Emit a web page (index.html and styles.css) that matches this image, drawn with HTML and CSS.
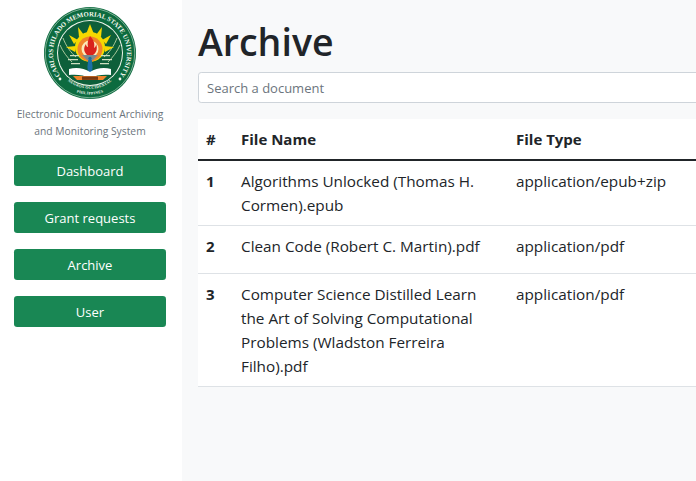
FILE: index.html
```html
<!DOCTYPE html>
<html lang="en">
<head>
<meta charset="utf-8">
<title>Archive</title>
<link rel="stylesheet" href="styles.css">
</head>
<body>
<div class="app">
  <aside class="sidebar">
    <svg class="logo" viewBox="0 0 92 92" width="92" height="92" aria-label="University seal">
      <defs>
        <path id="arcTop" d="M20.2 72.8 A37 37 0 1 1 71.8 72.8"/>
        <path id="arcBottom" d="M24 74 A35 35 0 0 0 68 74"/>
        <path id="arcBottom2" d="M32 85 A42 42 0 0 0 60 85"/>
      </defs>
      <circle cx="46" cy="46" r="46" fill="#0c6b3f"/>
      <circle cx="46" cy="46" r="44.8" fill="none" stroke="#e8f0e6" stroke-width=".5"/>
      <circle cx="46" cy="46" r="33" fill="#f4f7ef"/>
      <circle cx="46" cy="46" r="32" fill="#0d5f3a"/>
      <text class="seal-text"><textPath href="#arcTop" startOffset="50%" text-anchor="middle">CARLOS HILADO MEMORIAL STATE UNIVERSITY</textPath></text>
      <text class="seal-small"><textPath href="#arcBottom" startOffset="50%" text-anchor="middle">NEGROS OCCIDENTAL</textPath></text>
      <text class="seal-small"><textPath href="#arcBottom2" startOffset="50%" text-anchor="middle">PHILIPPINES</textPath></text>
      <circle cx="16" cy="72" r="1.4" fill="#f4f7ef"/>
      <circle cx="76" cy="72" r="1.4" fill="#f4f7ef"/>
      <path d="M19 31c3 8 8 15 13 19M73 31c-3 8-8 15-13 19M16 38c3 7 7 12 12 17M76 38c-3 7-7 12-12 17" fill="none" stroke="#a9c79a" stroke-width="1"/>
      <g fill="#f6d800">
        <path d="M46 17l3.5 9h-7z"/>
        <path d="M34 20l6 8-5 2z"/>
        <path d="M58 20l-6 8 5 2z"/>
        <path d="M25 28l9 5-4 4z"/>
        <path d="M67 28l-9 5 4 4z"/>
        <path d="M22 40l10-1-1 6z"/>
        <path d="M70 40l-10-1 1 6z"/>
        <circle cx="46" cy="40" r="15"/>
      </g>
      <circle cx="46" cy="42" r="12.5" fill="#f0842c"/>
      <circle cx="46" cy="42" r="8.5" fill="#fbe9b8"/>
      <path d="M46 29c4 4 5 8 4 12 2-1 2-3 2-4 2 5 0 9-3 11h-6c-3-3-4-7-1-11 0 2 1 3 2 3-1-4 0-7 2-11z" fill="#d9231d"/>
      <path d="M38 48h16l-5 5h-6z" fill="#7b8a8c"/>
      <path d="M26 48h9v1.2h-9zM57 48h9v1.2h-9zM24 52h10v1.2H24zM58 52h10v1.2H58zM27 56h9v1.2h-9zM56 56h9v1.2h-9z" fill="#cfe0c0"/>
      <path d="M44.2 53h3.6l.8 7-.8 6h-3.6l-.8-6z" fill="#1c6ea4"/>
      <circle cx="46" cy="51.5" r="1.7" fill="#1c6ea4"/>
      <path d="M25 62c7-2 15-1 21 3 6-4 14-5 21-3v6c-7-1-15 0-21 3-6-3-14-4-21-3z" fill="#fff"/>
      <path d="M29 69h34l-4 4H33z" fill="#f0842c"/>
      <rect x="38" y="69.5" width="16" height="3.4" fill="#7a3a12"/>
    </svg>
    <p class="tagline">Electronic Document Archiving and Monitoring System</p>
    <nav class="nav">
      <a class="nav-btn" href="#">Dashboard</a>
      <a class="nav-btn" href="#">Grant requests</a>
      <a class="nav-btn" href="#">Archive</a>
      <a class="nav-btn" href="#">User</a>
    </nav>
  </aside>
  <main class="main">
    <h1 class="title">Archive</h1>
    <input class="search" type="text" placeholder="Search a document">
    <table class="table">
      <colgroup>
        <col class="col-num">
        <col class="col-name">
        <col class="col-type">
      </colgroup>
      <thead>
        <tr><th>#</th><th>File Name</th><th>File Type</th></tr>
      </thead>
      <tbody>
        <tr><th>1</th><td>Algorithms Unlocked (Thomas H. Cormen).epub</td><td>application/epub+zip</td></tr>
        <tr class="row-action"><th>2</th><td>Clean Code (Robert C. Martin).pdf</td><td>application/pdf</td></tr>
        <tr><th>3</th><td>Computer Science Distilled Learn the Art of Solving Computational Problems (Wladston Ferreira Filho).pdf</td><td>application/pdf</td></tr>
      </tbody>
    </table>
  </main>
</div>
</body>
</html>
```
FILE: styles.css
```css
* {
  box-sizing: border-box;
}

html,
body {
  margin: 0;
  height: 100%;
  overflow: hidden;
}

body {
  font-family: "Open Sans", "Noto Sans", sans-serif;
  font-size: 16px;
  line-height: 24px;
  color: #212529;
  background: #f8f9fa;
}

.app {
  display: flex;
  height: 100%;
}

.sidebar {
  flex: 0 0 182px;
  background: #fff;
  padding: 7px 16px 0 14px;
  display: flex;
  flex-direction: column;
  align-items: center;
}

.logo {
  display: block;
  flex: none;
  width: 92px;
  height: 92px;
}

.seal-text {
  font-family: "Liberation Serif", serif;
  font-size: 6.7px;
  font-weight: 700;
  fill: #f4f7ef;
}

.seal-small {
  font-family: "Liberation Serif", serif;
  font-size: 3.8px;
  font-weight: 700;
  fill: #f4f7ef;
  letter-spacing: .3px;
}

.tagline {
  margin: 7px -2px 15px;
  text-align: center;
  font-size: 10.3px;
  line-height: 17px;
  color: #6c757d;
}

.nav {
  align-self: stretch;
  display: flex;
  flex-direction: column;
  gap: 16px;
}

.nav-btn {
  display: block;
  height: 31px;
  border-radius: 3.2px;
  background: #198754;
  color: #fff;
  font-size: 13px;
  line-height: 32px;
  text-align: center;
  text-decoration: none;
}

.main {
  flex: 0 0 auto;
  width: 514px;
  padding: 18px 0 0 16px;
  overflow: hidden;
}

.title {
  margin: 0 0 6px;
  font-size: 37.5px;
  line-height: 48px;
  font-weight: 600;
}

.search {
  display: block;
  width: 600px;
  height: 31px;
  padding: 4px 8px;
  border: 1px solid #ced4da;
  border-radius: 3.2px;
  background: #fff;
  font: inherit;
  font-size: 13px;
  color: #212529;
}

.search::placeholder {
  color: #6c757d;
  opacity: 1;
}

.table {
  margin-top: 16px;
  width: 700px;
  table-layout: fixed;
  border-collapse: collapse;
  background: #fff;
  font-size: 15.3px;
}

.col-num {
  width: 35px;
}

.col-name {
  width: 275px;
}

.table th,
.table td {
  padding: 8px;
  text-align: left;
  vertical-align: top;
  border-bottom: 1px solid #dee2e6;
}

.table th {
  font-size: 15px;
}

.table thead th {
  border-bottom: 2px solid #212529;
}

.row-action {
  height: 48px;
}
```
